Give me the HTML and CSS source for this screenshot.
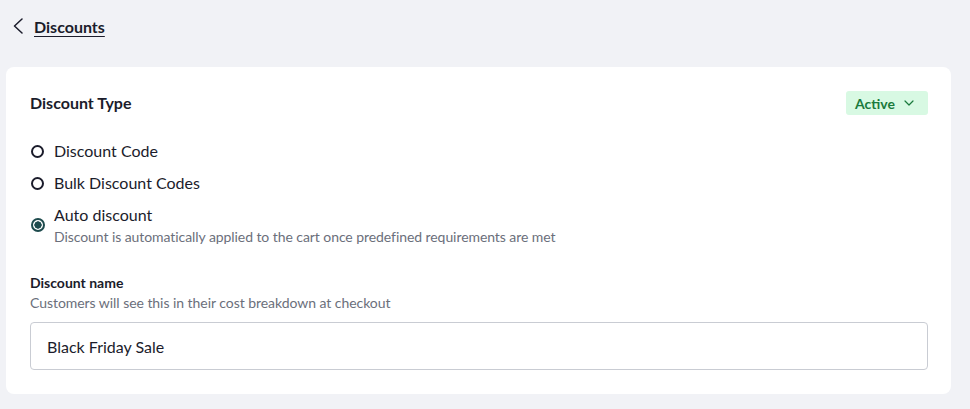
FILE: index.html
```html
<!DOCTYPE html>
<html lang="en">
<head>
<meta charset="utf-8">
<title>Discounts</title>
<link rel="stylesheet" href="styles.css">
</head>
<body>
<div class="page">
  <header class="topbar">
    <a class="back" href="#">
      <svg class="back-icon" width="16" height="16" viewBox="0 0 16 16" aria-hidden="true"><path d="M11 1 L3.5 8 L11 15" fill="none" stroke="#1b1c2b" stroke-width="1.5" stroke-linecap="round" stroke-linejoin="round"/></svg>
      <span class="back-text">Discounts</span>
    </a>
  </header>
  <section class="card">
    <div class="card-head">
      <h2 class="card-title">Discount Type</h2>
      <button class="status">
        <span>Active</span>
        <svg class="status-icon" width="16" height="16" viewBox="0 0 16 16" aria-hidden="true"><path d="M4 6 L8 10 L12 6" fill="none" stroke="#1a7a3c" stroke-width="1.2" stroke-linecap="round" stroke-linejoin="round"/></svg>
      </button>
    </div>
    <div class="options">
      <label class="option">
        <span class="radio"></span>
        <span class="option-label">Discount Code</span>
      </label>
      <label class="option">
        <span class="radio"></span>
        <span class="option-label">Bulk Discount Codes</span>
      </label>
      <label class="option option-on">
        <span class="radio radio-on"></span>
        <span class="option-body">
          <span class="option-label">Auto discount</span>
          <span class="option-desc">Discount is automatically applied to the cart once predefined requirements are met</span>
        </span>
      </label>
    </div>
    <div class="field">
      <div class="field-label">Discount name</div>
      <div class="field-help">Customers will see this in their cost breakdown at checkout</div>
      <div class="input">Black Friday Sale</div>
    </div>
  </section>
</div>
</body>
</html>
```

FILE: styles.css
```css
* { box-sizing: border-box; }
html, body { margin: 0; padding: 0; }
body {
  background: #f1f2f6;
  font-family: Lato, "Noto Sans", sans-serif;
  color: #1b1c2b;
  width: 970px;
  height: 409px;
  overflow: hidden;
}
.page {
  padding: 14px 19px 0 6px;
}
.topbar {
  height: 53px;
  display: flex;
  align-items: flex-start;
}
.back {
  display: flex;
  align-items: center;
  gap: 7px;
  height: 24px;
  padding-left: 5px;
  color: #1b1c2b;
  text-decoration: none;
}
.back-icon { display: block; }
.back-text {
  font-size: 16px;
  font-weight: 700;
  text-decoration: underline;
  text-underline-offset: 3px;
  text-decoration-thickness: 1px;
}
.card {
  background: #ffffff;
  border-radius: 8px;
  padding: 24px 23px 24px 24px;
}
.card-head {
  display: flex;
  justify-content: space-between;
  align-items: center;
  height: 24px;
}
.card-title {
  margin: 0;
  font-size: 16px;
  font-weight: 700;
  line-height: 24px;
}
.status {
  display: flex;
  align-items: center;
  gap: 6px;
  height: 24px;
  padding: 0 11px 0 9px;
  border: 0;
  border-radius: 3px;
  background: #d8f9e3;
  color: #1a7a3c;
  font-family: Lato, "Noto Sans", sans-serif;
  font-size: 14px;
  font-weight: 700;
}
.status-icon { display: block; }
.options {
  margin-top: 24px;
  display: flex;
  flex-direction: column;
  gap: 8px;
}
.option {
  display: flex;
  align-items: center;
  gap: 10px;
  padding-left: 1px;
}
.option-on {
  gap: 9px;
}
.radio {
  flex: none;
  width: 13px;
  height: 13px;
  border: 2px solid #1b1c2b;
  border-radius: 50%;
  background: #fff;
}
.radio-on {
  width: 14px;
  height: 14px;
  border-color: #1e4b4d;
  background: radial-gradient(circle, #1e4b4d 0 3.4px, #fff 3.9px);
}
.option-body {
  display: flex;
  flex-direction: column;
}
.option-label {
  font-size: 16px;
  line-height: 24px;
  color: #1b1c2b;
}
.option-desc {
  font-size: 14px;
  line-height: 20px;
  letter-spacing: -0.07px;
  color: #6b6f7b;
}
.field {
  margin-top: 26px;
}
.field-label {
  font-size: 14px;
  font-weight: 700;
  line-height: 20px;
}
.field-help {
  font-size: 14px;
  line-height: 20px;
  letter-spacing: -0.05px;
  color: #6b6f7b;
}
.input {
  margin-top: 9px;
  height: 48px;
  border: 1px solid #c9ccd3;
  border-radius: 4px;
  padding: 0 16px;
  display: flex;
  align-items: center;
  font-size: 16px;
  color: #1b1c2b;
}
```
